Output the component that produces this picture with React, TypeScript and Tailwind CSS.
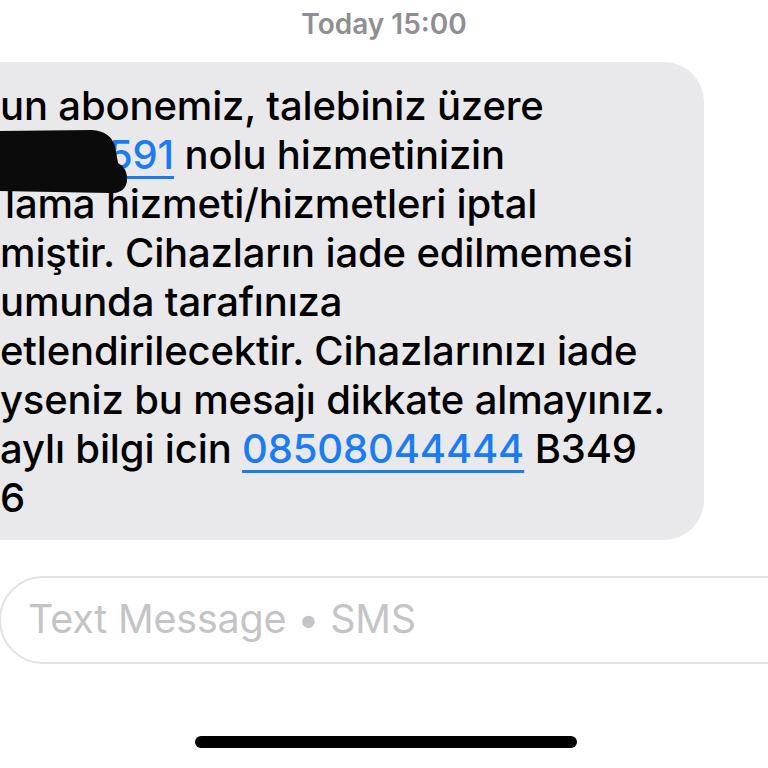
const lines: { text: React.ReactNode; indent?: string }[] = [
    { text: "un abonemiz, talebiniz üzere" },
    {
        text: (
            <>
                <span className="inline-block w-[108px]" />
                <span className="text-[#1a7cf5] underline decoration-[3px] underline-offset-[7px]">591</span> nolu hizmetinizin
            </>
        )
    },
    { text: "lama hizmeti/hizmetleri iptal", indent: "pl-[5px]" },
    { text: "miştir. Cihazların iade edilmemesi" },
    { text: "umunda tarafınıza" },
    { text: "etlendirilecektir. Cihazlarınızı iade" },
    { text: "yseniz bu mesajı dikkate almayınız." },
    {
        text: (
            <>
                aylı bilgi icin{" "}
                <span className="text-[#1a7cf5] underline decoration-[3px] underline-offset-[7px]">08508044444</span> B349
            </>
        )
    },
    { text: "6" }
]

function Redaction() {
    return (
        <svg
            className="pointer-events-none absolute left-0 top-0"
            width="140"
            height="200"
            viewBox="0 0 140 200"
        >
            <path
                d="M0 131 L92 130 Q110 131 115 146 L118 163 Q128 168 127 181 Q125 194 110 193 L0 191 Z"
                fill="#0b0b0b"
            />
        </svg>
    )
}

export default function App() {
    return (
        <div
            className="relative h-[768px] w-[768px] overflow-hidden bg-white"
            style={{ fontFamily: "Inter, 'Liberation Sans', sans-serif" }}
        >
            <div className="pt-[8px] text-center text-[28px] font-semibold leading-[32px] text-[#8e8e93]">
                Today 15:00
            </div>

            <div className="ml-[-40px] mt-[22px] w-[744px] rounded-[40px] bg-[#e9e9eb] pb-[18px] pl-[40px] pt-[19px]">
                <div className="text-[40px] font-medium leading-[49px] tracking-[-0.15px] text-black">
                    {lines.map((line, i) => (
                        <div key={i} className={`whitespace-nowrap ${line.indent ?? ""}`}>
                            {line.text}
                        </div>
                    ))}
                </div>
            </div>

            <Redaction />

            <div className="ml-[-1px] mt-[36px] flex h-[88px] w-[820px] items-center rounded-full border-[2px] border-[#e2e2e4] pl-[27px]">
                <span className="text-[39.5px] leading-none tracking-[-0.2px] text-[#c4c4c7]">Text Message • SMS</span>
            </div>

            <div className="mt-[72px] flex justify-center">
                <div className="ml-[4px] h-[12px] w-[382px] rounded-full bg-black" />
            </div>
        </div>
    )
}
